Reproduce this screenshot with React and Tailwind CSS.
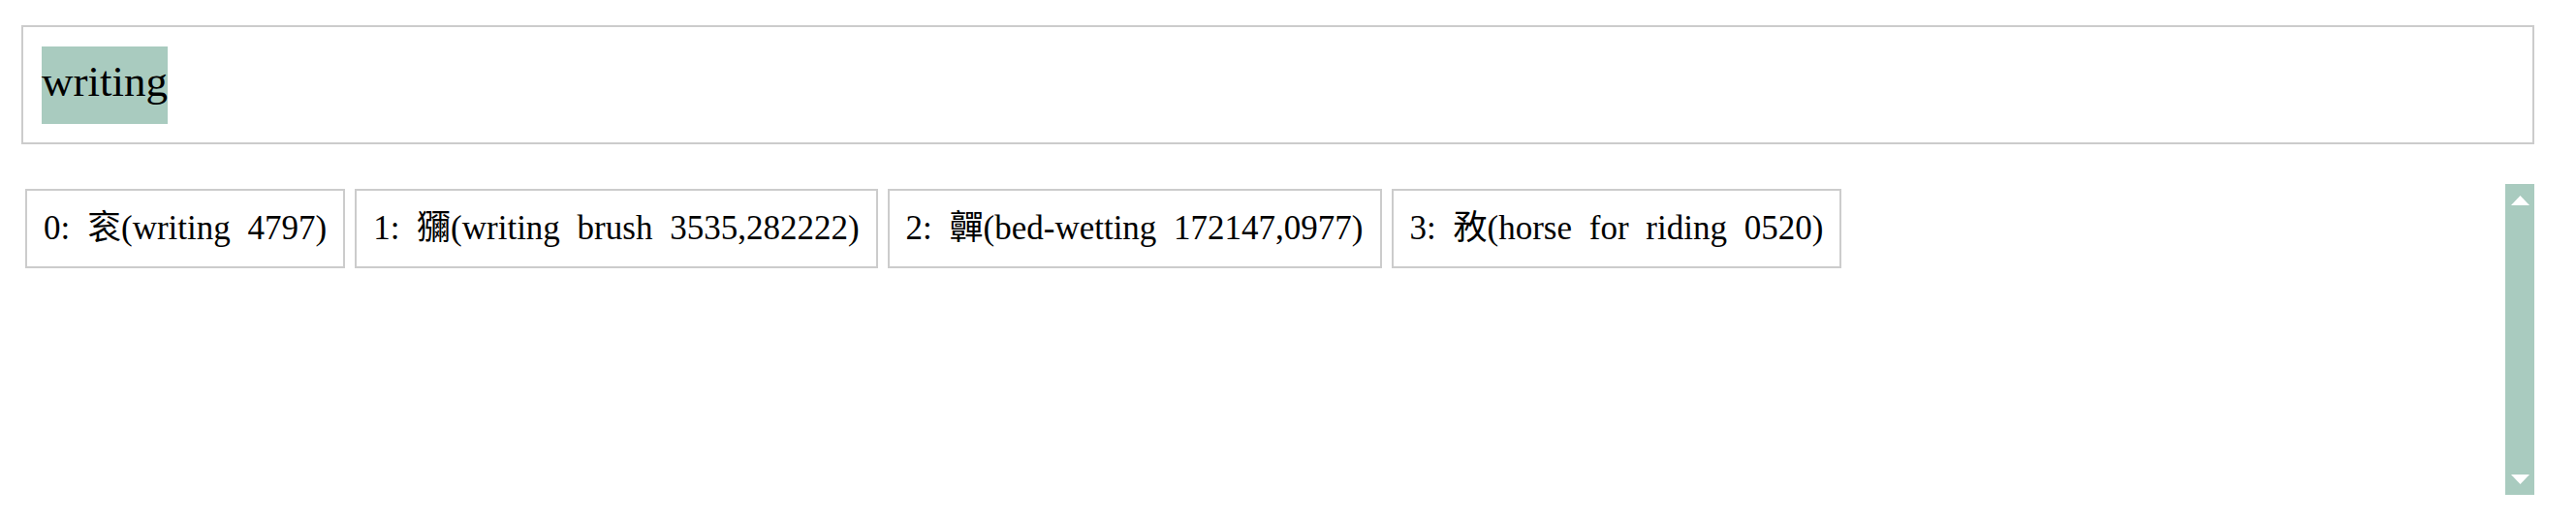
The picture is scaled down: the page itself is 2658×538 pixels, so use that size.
export default function App() {
  const results = [
    '0: 衮(writing 4797)',
    '1: 獼(writing brush 3535,282222)',
    '2: 䯬(bed-wetting 172147,0977)',
    '3: 敄(horse for riding 0520)',
  ];

  return (
    <div className="h-[538px] bg-white pt-[26px] pl-[22px] pr-[43px] text-black font-['Liberation_Serif','Noto_Sans_CJK_SC',serif]">
      {/* search input */}
      <div className="flex border-2 border-[#cccccc] pl-[19px] pt-[20px] pb-[19px]">
        <span className="inline-block bg-[#a9cbbf] text-[45px] leading-[72px] pb-[8px]">writing</span>
      </div>

      {/* results */}
      <div className="mt-[41px] flex h-[321px]">
        <div className="flex flex-1 items-start gap-[10px] pl-[4px] pt-[5px]">
          {results.map((r) => (
            <div
              key={r}
              className="whitespace-nowrap border-2 border-[#cccccc] px-[17px] py-[17px] text-[35px] leading-[44px] [word-spacing:9px]"
            >
              {r}
            </div>
          ))}
        </div>
        <div className="flex w-[30px] flex-col items-center justify-between bg-[#a9cbbf] pt-[12px] pb-[11px]">
          <svg width="19" height="10" viewBox="0 0 19 10">
            <polygon points="9.5,0 19,10 0,10" fill="#ffffff" />
          </svg>
          <svg width="19" height="10" viewBox="0 0 19 10">
            <polygon points="0,0 19,0 9.5,10" fill="#ffffff" />
          </svg>
        </div>
      </div>
    </div>
  );
}
